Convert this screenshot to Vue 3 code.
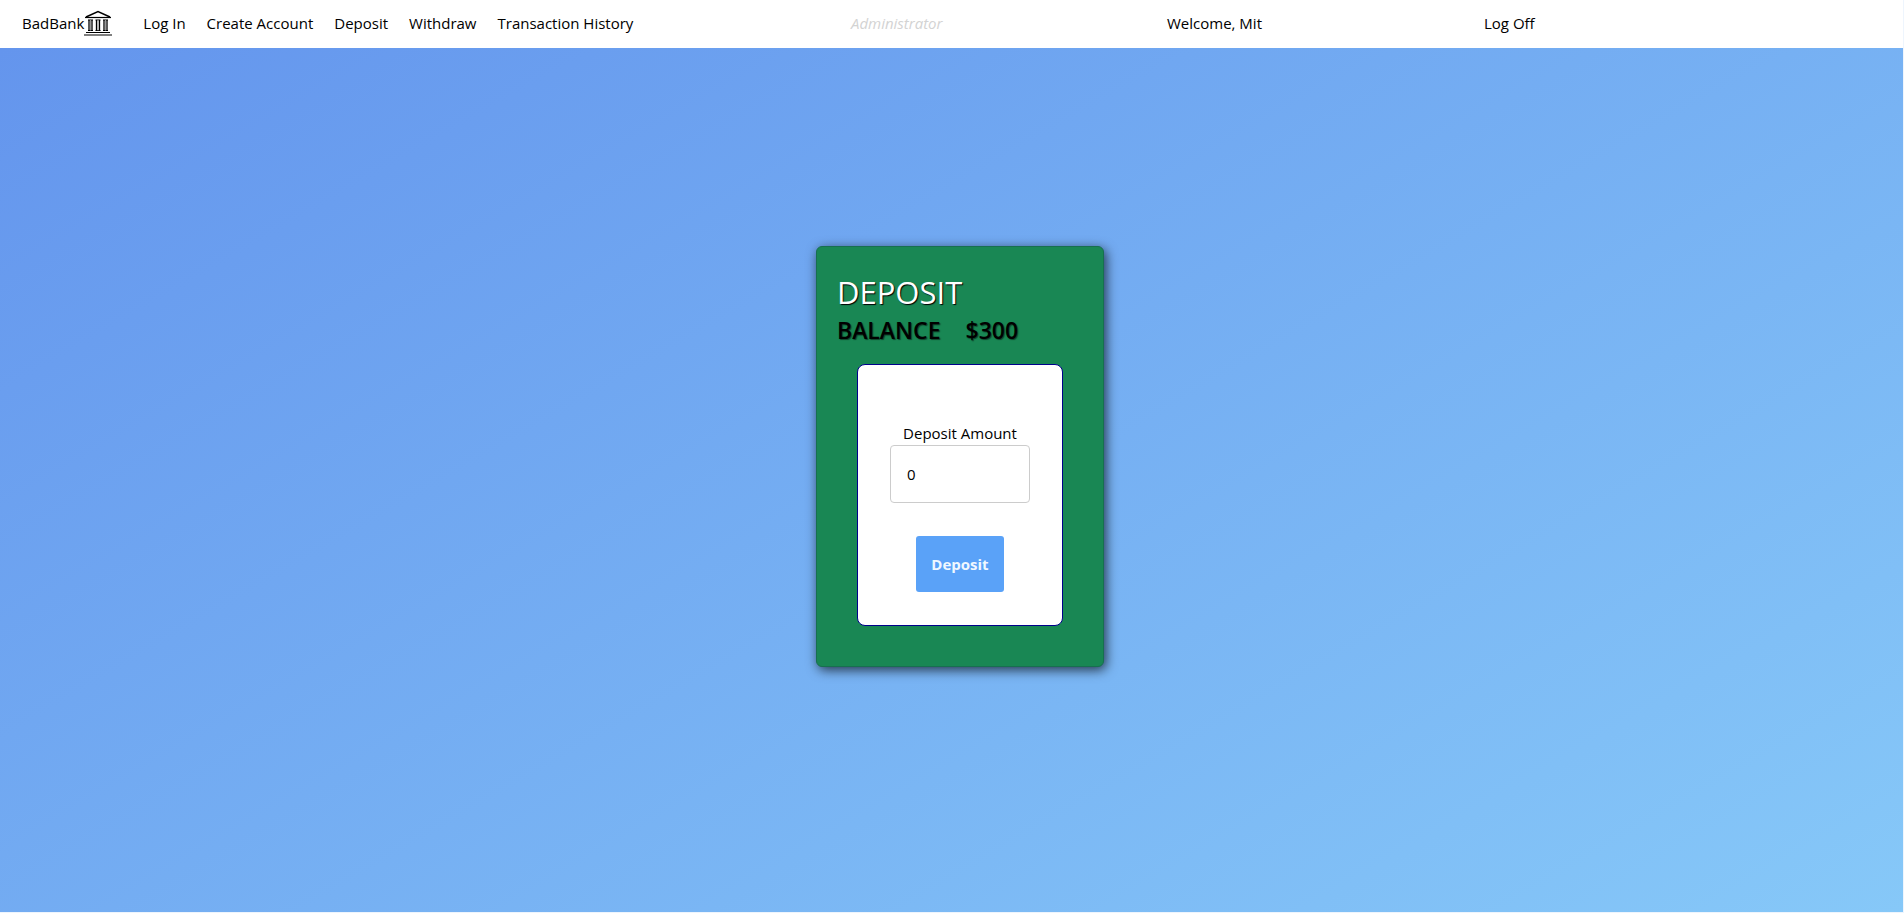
<script setup>
import { ref } from 'vue'

const links = ['Log In', 'Create Account', 'Deposit', 'Withdraw', 'Transaction History']
const balance = ref(300)
const amount = ref(0)

function deposit() {
  balance.value += Number(amount.value) || 0
  amount.value = 0
}
</script>

<template>
  <div class="page">
    <header class="bar">
      <nav class="nav">
        <a href="#" class="brand">
          <span>BadBank</span>
          <svg class="bank" viewBox="0 0 28 26" aria-hidden="true">
            <path d="M2 7 14 1.500 26 7" fill="none" stroke="#000" stroke-width="1.500" />
            <path d="M1 7.500h26" stroke="#000" stroke-width="1.200" />
            <path
              d="M4 10h5M4 20.500h5M11.500 10h5M11.500 20.500h5M19 10h5M19 20.500h5"
              stroke="#000"
              stroke-width="1.200"
            />
            <path
              d="M5 10v10.500M8 10v10.500M12.500 10v10.500M15.500 10v10.500M20 10v10.500M23 10v10.500"
              stroke="#000"
              stroke-width="1.300"
            />
            <path d="M6.500 10v10.500M14 10v10.500M21.500 10v10.500" stroke="#999" stroke-width="1" />
            <path d="M2 22.500h24M0 25h28" stroke="#000" stroke-width="1.200" />
          </svg>
        </a>
        <a v-for="link in links" :key="link" href="#">{{ link }}</a>
      </nav>
      <span class="role">Administrator</span>
      <span>Welcome, Mit</span>
      <a href="#">Log Off</a>
    </header>

    <main class="content">
      <section class="card">
        <h1 class="title">DEPOSIT</h1>
        <h2 class="balance"><span>BALANCE</span><span>${{ balance }}</span></h2>
        <form class="panel" @submit.prevent="deposit">
          <label for="amount">Deposit Amount</label>
          <input id="amount" v-model="amount" type="text" inputmode="decimal" />
          <button type="submit">Deposit</button>
        </form>
      </section>
    </main>
  </div>
</template>

<style>
body {
  background: #eef5fd;
}
</style>

<style scoped>
.page {
  display: flex;
  flex-direction: column;
  box-sizing: border-box;
  min-height: 100vh;
  padding: 0 1px 1px 0;
  font-family: "Segoe UI", "Open Sans", "Noto Sans", sans-serif;
  font-size: 15px;
  line-height: 24px;
  color: #000;
}

.bar {
  display: grid;
  grid-template-columns: 829fr 316fr 317fr 419fr;
  align-items: center;
  box-sizing: border-box;
  height: 48px;
  padding: 0 0 2px 22px;
  background: #fff;
}

.bar a {
  color: #000;
  text-decoration: none;
  white-space: nowrap;
}

.nav {
  display: flex;
  align-items: center;
  gap: 21px;
}

.brand {
  display: flex;
  align-items: center;
  margin-right: 10px;
}

.bank {
  width: 28px;
  height: 26px;
}

.role {
  font-style: italic;
  font-weight: 500;
  color: #d3d3d3;
}

.content {
  display: flex;
  flex: 1;
  justify-content: center;
  align-items: flex-start;
  padding: 198px 0 48px 17px;
  background: linear-gradient(150deg, #6495ed, #86c8f8);
}

.card {
  box-sizing: border-box;
  width: 288px;
  padding: 24px 20px 40px;
  border: 1px solid #176f50;
  border-radius: 6px;
  background: #198754;
  box-shadow: 2px 3px 12px rgba(0, 0, 0, 0.7);
}

.title {
  margin: 0;
  font-size: 31px;
  font-weight: 400;
  line-height: 42px;
  color: #fff;
  text-shadow: 1px 1px 1px #000;
}

.balance {
  display: flex;
  gap: 25px;
  margin: 0 0 16px;
  font-size: 23px;
  font-weight: 600;
  line-height: 35px;
  text-shadow: 1px 1px 1px rgba(0, 0, 0, 0.5);
}

.panel {
  display: flex;
  flex-direction: column;
  align-items: center;
  box-sizing: border-box;
  margin: 0 20px;
  padding: 56px 32px 33px;
  border: 1px solid #00008b;
  border-radius: 8px;
  background: #fff;
}

.panel input {
  box-sizing: border-box;
  width: 100%;
  height: 58px;
  padding: 0 16px;
  border: 1px solid #ccc;
  border-radius: 4px;
  background: #fff;
  font: inherit;
  color: #000;
}

.panel button {
  height: 56px;
  margin-top: 33px;
  padding: 0 15px;
  border: 0;
  border-radius: 3px;
  background: #5aa2f8;
  font: inherit;
  font-weight: 700;
  color: #f0f8ff;
}
</style>
